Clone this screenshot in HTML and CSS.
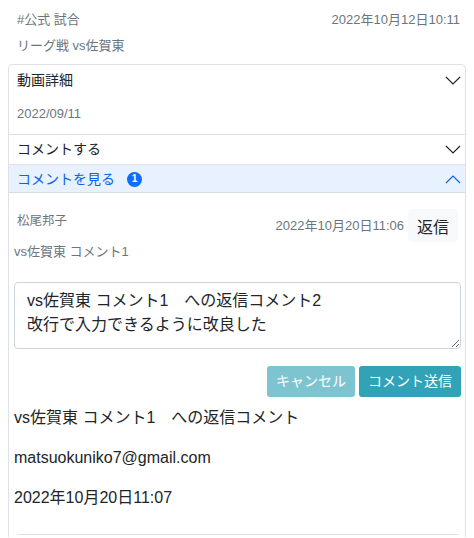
FILE: index.html
```html
<!DOCTYPE html>
<html lang="ja">
<head>
<meta charset="utf-8">
<link rel="stylesheet" href="styles.css">
</head>
<body>
<div class="page">
  <div class="post-head">
    <div class="row-between">
      <span class="muted">#公式 試合</span>
      <span class="muted">2022年10月12日10:11</span>
    </div>
    <div class="muted title">リーグ戦 vs佐賀東</div>
  </div>
  <div class="card">
    <div class="acc-header">
      <span>動画詳細</span>
      <svg class="chev" width="16" height="9" viewBox="0 0 16 9"><polyline points="1,1 8,8 15,1" fill="none" stroke="#212529" stroke-width="1.2"/></svg>
    </div>
    <div class="acc-body muted">2022/09/11</div>
    <div class="acc-header bordered">
      <span>コメントする</span>
      <svg class="chev" width="16" height="9" viewBox="0 0 16 9"><polyline points="1,1 8,8 15,1" fill="none" stroke="#212529" stroke-width="1.2"/></svg>
    </div>
    <div class="acc-header bordered active">
      <span class="hl">コメントを見る <span class="badge">1</span></span>
      <svg class="chev" width="16" height="9" viewBox="0 0 16 9"><polyline points="1,8 8,1 15,8" fill="none" stroke="#0c63e4" stroke-width="1.2"/></svg>
    </div>
    <div class="comment-body">
      <div class="meta">
        <div class="comment-row">
          <span class="name">松尾邦子</span>
          <div class="right">
            <span class="muted">2022年10月20日11:06</span>
            <button class="btn-light">返信</button>
          </div>
        </div>
      </div>
      <div class="muted ctext">vs佐賀東 コメント1</div>
      <textarea class="ta">vs佐賀東 コメント1　への返信コメント2
改行で入力できるように改良した</textarea>
      <div class="actions">
        <button class="btn cancel">キャンセル</button>
        <button class="btn send">コメント送信</button>
      </div>
      <p class="reply">vs佐賀東 コメント1　への返信コメント</p>
      <p class="reply">matsuokuniko7@gmail.com</p>
      <p class="reply">2022年10月20日11:07</p>
      <div class="meta"><hr class="sep"></div>
    </div>
  </div>
</div>
</body>
</html>
```

FILE: styles.css
```css
html, body {
  margin: 0;
  padding: 0;
  background: #fff;
}
body {
  font-family: "Liberation Sans", "Noto Sans CJK JP", sans-serif;
  color: #212529;
  font-size: 16px;
  line-height: 24px;
}
.page {
  padding: 10px 8px 0 8px;
}
.post-head {
  padding: 0 6px 0 9px;
}
.row-between {
  display: flex;
  justify-content: space-between;
}
.muted {
  color: #6c757d;
  font-size: 13px;
  line-height: 20px;
}
.title {
  margin-top: 6px;
}
.card {
  margin-top: 8px;
  border: 1px solid #dee2e6;
  border-radius: 5px 5px 0 0;
  border-bottom: none;
}
.acc-header {
  display: flex;
  justify-content: space-between;
  align-items: center;
  height: 30px;
  padding: 0 4px 0 8px;
  font-size: 14px;
  line-height: 21px;
}
.acc-header.bordered {
  border-top: 1px solid #dee2e6;
  height: 29px;
}
.acc-header.active {
  background: #e7f1ff;
  color: #0c63e4;
  box-shadow: inset 0 -1px 0 #d5dde8;
  height: 28px;
}
.chev {
  display: block;
}
.hl {
  display: flex;
  align-items: center;
}
.badge {
  display: inline-flex;
  justify-content: center;
  align-items: center;
  width: 15px;
  height: 15px;
  border-radius: 50%;
  background: #0d6efd;
  color: #fff;
  font-size: 10px;
  font-weight: bold;
  line-height: 1;
  margin-left: 12px;
}
.acc-body {
  padding: 9px 8px 10px 8px;
}
.comment-body {
  padding: 16px 4px 2px 5px;
}
.meta {
  padding: 0 3px;
}
.comment-row {
  display: flex;
  justify-content: space-between;
  align-items: flex-start;
}
.name {
  color: #6c757d;
  font-size: 12.5px;
  line-height: 18px;
  margin-top: 3px;
}
.right {
  display: flex;
  align-items: center;
  gap: 4px;
}
.btn-light {
  background: #f8f9fa;
  border: none;
  border-radius: 4px;
  font-family: inherit;
  font-size: 16px;
  color: #212529;
  height: 33px;
  width: 50px;
  padding: 0;
}
.ta {
  display: block;
  box-sizing: border-box;
  width: 100%;
  height: 67px;
  margin-top: 20px;
  padding: 6px 12px;
  border: 1px solid #ced4da;
  border-radius: 4px;
  font-family: inherit;
  font-size: 16px;
  line-height: 24px;
  color: #212529;
  resize: vertical;
  overflow: hidden;
}
.actions {
  display: flex;
  justify-content: flex-end;
  gap: 4px;
  margin-top: 17px;
}
.btn {
  border: none;
  border-radius: 3px;
  font-family: inherit;
  font-size: 14px;
  line-height: 21px;
  height: 31px;
  padding: 0 9px;
  color: #fff;
}
.cancel {
  background: #7ec4d0;
  width: 88px;
}
.send {
  background: #32a2b7;
  width: 102px;
}
.reply {
  margin: 9px 0 16px 0;
}
.reply + .reply {
  margin-top: 0;
}
.sep {
  border: none;
  border-top: 1px solid #dee2e6;
  margin: 24px 0 0 0;
}
```
